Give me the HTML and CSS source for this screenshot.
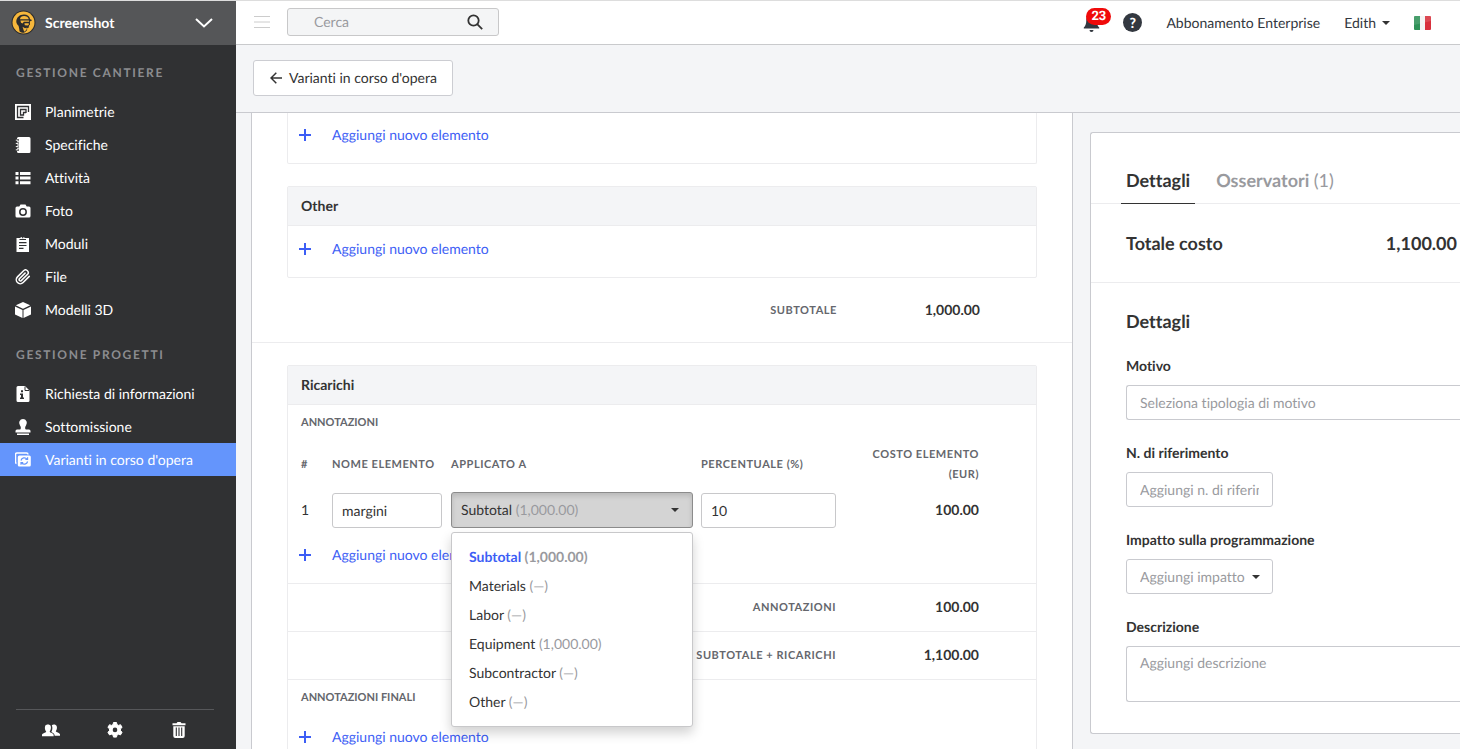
FILE: index.html
```html
<!DOCTYPE html>
<html lang="it">
  <head>
    <meta charset="UTF-8" />
    <meta name="viewport" content="width=device-width, initial-scale=1.0" />
    <title>Varianti in corso d'opera</title>
    <link rel="stylesheet" href="styles.css">
  </head>
  <body>
    <aside class="sidebar">
      <button type="button" class="project-switch">
        <svg class="logo" viewBox="0 0 26 26">
          <circle cx="13" cy="13" r="12.5" fill="#2b2b2d"/>
          <circle cx="13" cy="13" r="11.4" fill="#f6b73c"/>
          <path d="M5.500 11.500C6 7.500 9 4.600 13.400 4.600c3.600 0 6 2 6.500 5l1.500.5v1.300l-1.700.2v3.800l-1 .6-.3 2.400-1.500.4-.2 2.200-1.700 1.600-1.500 1c-2 0-3.500-.6-4.700-1.600C8.800 20 8.300 18 7.800 16.300 6.300 15 5.300 13.500 5.500 11.500z" fill="#2b2b2d"/>
          <path d="M9.300 9.500c.3-2 1.900-3.300 4.300-3.300 2.500 0 4.300 1.200 4.900 3.300zM9.800 11h9v1.100h-5.400l-1.400 1.900-1.600-.8zM14 13.900h4.500v1.400l-1.200.8-3-.3zM12 17.500l2.500 1.500 2-.6-.5 2.400-2.300 1.900z" fill="#f6b73c"/>
        </svg>
        <span class="project-name">Screenshot</span>
        <svg class="chevron" viewBox="0 0 18 10"><path d="M1 1l8 7.500L17 1" fill="none" stroke="#fff" stroke-width="2"/></svg>
      </button>

      <nav class="nav">
        <div class="nav-group">
          <h2 class="nav-title">Gestione cantiere</h2>
          <a href="#" class="nav-item">
            <svg class="icon" viewBox="0 0 16 16"><path d="M0 0h16v16H0z" fill="#fff"/><path d="M8.500 13.500h-6v-11h11v5.500M5.500 11V5.500h5.500v3H8.500v2.500z" fill="none" stroke="#303133" stroke-width="1.300"/><path d="M11 9h4v5h-5v-2.500h1z" fill="#fff"/></svg>
            Planimetrie
          </a>
          <a href="#" class="nav-item">
            <svg class="icon" viewBox="0 0 16 16"><path d="M3.500 0H14a1.500 1.500 0 0 1 1.500 1.500v13A1.500 1.500 0 0 1 14 16H3.500A1.500 1.500 0 0 1 2 14.500v-13A1.500 1.500 0 0 1 3.500 0z" fill="#fff"/><path d="M.8 3.200h3M.8 6.400h3M.8 9.600h3M.8 12.800h3" stroke="#303133" stroke-width="2.200"/><path d="M.8 3.200h2.600M.8 6.400h2.600M.8 9.600h2.600M.8 12.800h2.600" stroke="#fff" stroke-width="1"/></svg>
            Specifiche
          </a>
          <a href="#" class="nav-item">
            <svg class="icon" viewBox="0 0 16 16" fill="#fff"><path d="M.5 2H3.500v3H.5zM5 2h10.500v3H5zM.5 6.600H3.500v3H.5zM5 6.600h10.500v3H5zM.5 11.200H3.500v3H.5zM5 11.200h10.500v3H5z"/></svg>
            Attività
          </a>
          <a href="#" class="nav-item">
            <svg class="icon" viewBox="0 0 16 16"><path d="M5.500 1.500h5l1.200 2H14A1.500 1.500 0 0 1 15.500 5v8A1.500 1.500 0 0 1 14 14.500H2A1.500 1.500 0 0 1 .5 13V5A1.500 1.500 0 0 1 2 3.500h2.300z" fill="#fff"/><circle cx="8" cy="9" r="3.200" fill="none" stroke="#303133" stroke-width="1.500"/></svg>
            Foto
          </a>
          <a href="#" class="nav-item">
            <svg class="icon" viewBox="0 0 16 16"><path d="M1.500 2H5a3 2.500 0 0 1 5 0h4v14h-12.500z" fill="#fff"/><path d="M4.500 3.500h6.500M7.700 1v1.300M4 6.700h7.500M4 9.500h7.500M4 12.300h4.500" stroke="#303133" stroke-width="1.200"/></svg>
            Moduli
          </a>
          <a href="#" class="nav-item">
            <svg class="icon" viewBox="0 0 24 24"><path d="M21.400 11.100l-9.200 9.200a6 6 0 0 1-8.500-8.500l9.200-9.200a4 4 0 0 1 5.700 5.700l-9.200 9.200a2 2 0 0 1-2.800-2.800l8.500-8.500" fill="none" stroke="#fff" stroke-width="2.300" stroke-linecap="round"/></svg>
            File
          </a>
          <a href="#" class="nav-item">
            <svg class="icon" viewBox="0 0 16 16" fill="#fff"><path d="M8 0l7.200 3.300L8 6.700.8 3.300zM0 4.400l7.500 3.500V16L0 12.500zM16 4.400L8.500 7.900V16l7.500-3.500z"/></svg>
            Modelli 3D
          </a>
        </div>

        <div class="nav-group">
          <h2 class="nav-title">Gestione progetti</h2>
          <a href="#" class="nav-item">
            <svg class="icon" viewBox="0 0 16 16"><path d="M3 0h7l4.500 4.500V14.500A1.500 1.500 0 0 1 13 16H3a1.500 1.500 0 0 1-1.500-1.500v-13A1.500 1.500 0 0 1 3 0z" fill="#fff"/><path d="M10 .5V4.500h4" fill="none" stroke="#303133"/><path d="M6 4.300h2v2H6zM5 7.500h3V11.500h1V13H5v-1.500h1V9H5z" fill="#303133"/></svg>
            Richiesta di informazioni
          </a>
          <a href="#" class="nav-item">
            <svg class="icon" viewBox="0 0 16 16" fill="#fff"><path d="M8 0a4 4 0 0 1 3 6.500C10 8 9.800 9.500 10.800 10.500H14a1.500 1.500 0 0 1 1.500 1.500V13.500H.5v-1.500A1.500 1.500 0 0 1 2 10.500h3.200C6.200 9.500 6 8 5 6.500A4 4 0 0 1 8 0zM2 14.600h12V16H2z"/></svg>
            Sottomissione
          </a>
          <a href="#" class="nav-item active">
            <svg class="icon" viewBox="0 0 16 16"><path d="M1.500 11.500a1.500 1.500 0 0 1-1-1.500V2.500A1.500 1.500 0 0 1 2 1h9.500A1.500 1.500 0 0 1 13 2.500" fill="none" stroke="#fff" stroke-width="1.500"/><rect x="2.800" y="3.500" width="13" height="11" rx="1.500" fill="#fff"/><path d="M6 8.500a3.400 3.400 0 0 1 6-1.300M12.600 9.500a3.400 3.400 0 0 1-6 1.300M12.600 5.300v2.200h-2.200M6 12.700v-2.200h2.200" fill="none" stroke="#6495fc" stroke-width="1.200"/></svg>
            Varianti in corso d'opera
          </a>
        </div>
      </nav>

      <div class="sidebar-tools">
        <button type="button" class="tool" aria-label="Persone">
          <svg class="icon icon-wide" viewBox="0 1 17 14" fill="#fff"><path d="M0 14v-1.500C.3 11 3.500 10.500 4 9.600 2.600 8 2.500 5.500 3 4.200 3.500 2.300 7.700 2.300 8.200 4.200c.5 1.300.2 3.800-1 5.400.5.900 3.500 1.400 3.800 2.900V14zM9.300 3.400c1.200-1.200 4.200-.7 4.600 1 .5 1.500.2 3.300-.9 4.700.4.900 3.500 1.400 4 3V13.500h-5c-.1-2-1.300-2.500-3.200-3.500.9-1.500 1.500-4.300.5-6.600z"/></svg>
        </button>
        <button type="button" class="tool" aria-label="Impostazioni">
          <svg class="icon" viewBox="0 0 16 16"><path d="M6.500.5h3l.4 2 1.600.9 2-.7 1.600 2.700-1.600 1.400v2l1.600 1.400-1.600 2.700-2-.7-1.600.9-.4 2h-3l-.4-2-1.600-.9-2 .7L.9 10.200l1.600-1.400v-2L.9 5.400l1.600-2.700 2 .7 1.600-.9z" fill="#fff" stroke="#fff" stroke-linejoin="round"/><circle cx="8" cy="7.900" r="2.300" fill="#303133"/></svg>
        </button>
        <button type="button" class="tool" aria-label="Cestino">
          <svg class="icon" viewBox="0 0 16 16"><path d="M1.500 1.300h4L6.500 0h3l1 1.300h4v2h-13zM2.300 4.200h11.400V14a2 2 0 0 1-2 2H4.300a2 2 0 0 1-2-2z" fill="#fff"/><path d="M5.300 5.500v8.500M8 5.500v8.500M10.700 5.500v8.500" stroke="#303133" stroke-width="1.100"/></svg>
        </button>
      </div>
    </aside>

    <div class="page">
      <header class="topbar">
        <button type="button" class="menu-toggle" aria-label="Menu">
          <svg class="icon" viewBox="0 0 16 16"><path d="M0 2.500h16M0 8h16M0 13.500h16" stroke="#ccc"/></svg>
        </button>
        <form class="search">
          <input type="search" class="search-input" placeholder="Cerca" aria-label="Cerca">
          <button type="button" class="search-button" aria-label="Avvia ricerca">
            <svg class="icon" viewBox="0 0 16 16" fill="none" stroke="#333" stroke-width="1.800"><circle cx="6.500" cy="6.500" r="5.200"/><path d="M10.200 10.200l5 5"/></svg>
          </button>
        </form>
        <div class="account">
          <button type="button" class="bell" aria-label="Notifiche">
            <svg class="bell-icon" viewBox="0 0 16 20" fill="#333840"><path d="M8 1.500c3.200 0 5.200 2.300 5.200 5.500 0 4 .8 5.800 2.500 7.500v1H.3v-1C2 12.800 2.800 11 2.800 7c0-3.200 2-5.500 5.200-5.500zM6 17h4a2 2 0 0 1-4 0z"/></svg>
            <span class="badge">23</span>
          </button>
          <button type="button" class="help" aria-label="Aiuto">?</button>
          <a href="#" class="plan">Abbonamento Enterprise</a>
          <button type="button" class="user">Edith <span class="caret"></span></button>
          <button type="button" class="lang" aria-label="Italiano">
            <svg class="flag" viewBox="0 0 17 14"><path d="M0 0h6v14H0z" fill="#2f9158"/><path d="M6 0h5v14H6z" fill="#f4f4f4"/><path d="M11 0h6v14h-6z" fill="#d8303c"/><path d="M0 0h17v5L0 9z" fill="#fff" opacity=".12"/></svg>
          </button>
        </div>
      </header>

      <div class="subbar">
        <a href="#" class="back">
          <svg class="back-icon" viewBox="0 0 12 12"><path d="M6.300 .8L1 6l5.300 5.200M1 6h11" fill="none" stroke="#333" stroke-width="1.500"/></svg>
          Varianti in corso d'opera
        </a>
      </div>

      <main class="content">
        <section class="costs">
          <div class="section">
            <div class="card card-cut">
              <a href="#" class="add-row"><span class="plus"></span>Aggiungi nuovo elemento</a>
            </div>
            <div class="card">
              <h3 class="card-title">Other</h3>
              <a href="#" class="add-row"><span class="plus"></span>Aggiungi nuovo elemento</a>
            </div>
            <div class="total-row subtotal">
              <span class="total-label">Subtotale</span>
              <span class="amount">1,000.00</span>
            </div>
          </div>

          <div class="section markups">
            <div class="card">
              <h3 class="card-title">Ricarichi</h3>
              <h4 class="card-label">Annotazioni</h4>
              <table class="markup-table">
                <colgroup>
                  <col class="col-index">
                  <col class="col-name">
                  <col>
                  <col class="col-percent">
                  <col class="col-cost">
                </colgroup>
                <thead>
                  <tr>
                    <th class="index">#</th>
                    <th>Nome elemento</th>
                    <th>Applicato a</th>
                    <th>Percentuale (%)</th>
                    <th class="cost">Costo elemento (EUR)</th>
                  </tr>
                </thead>
                <tbody>
                  <tr>
                    <td class="index">1</td>
                    <td><input type="text" class="input" value="margini" aria-label="Nome elemento"></td>
                    <td class="applied">
                      <div class="dropdown">
                        <button type="button" class="dropdown-toggle" aria-haspopup="listbox" aria-expanded="true">
                          <span>Subtotal <span class="muted">(1,000.00)</span></span>
                          <span class="caret"></span>
                        </button>
                        <ul class="dropdown-menu" role="listbox" aria-label="Applicato a">
                          <li role="option" class="option selected" aria-selected="true">Subtotal <span class="muted">(1,000.00)</span></li>
                          <li role="option" class="option">Materials <span class="muted">(—)</span></li>
                          <li role="option" class="option">Labor <span class="muted">(—)</span></li>
                          <li role="option" class="option">Equipment <span class="muted">(1,000.00)</span></li>
                          <li role="option" class="option">Subcontractor <span class="muted">(—)</span></li>
                          <li role="option" class="option">Other <span class="muted">(—)</span></li>
                        </ul>
                      </div>
                    </td>
                    <td><input type="text" class="input" value="10" aria-label="Percentuale"></td>
                    <td class="cost">100.00</td>
                  </tr>
                </tbody>
              </table>
              <a href="#" class="add-row"><span class="plus"></span>Aggiungi nuovo elemento</a>
              <div class="total-row">
                <span class="total-label">Annotazioni</span>
                <span class="amount">100.00</span>
              </div>
              <div class="total-row last">
                <span class="total-label">Subtotale + ricarichi</span>
                <span class="amount">1,100.00</span>
              </div>
              <h4 class="card-label">Annotazioni finali</h4>
              <a href="#" class="add-row"><span class="plus"></span>Aggiungi nuovo elemento</a>
            </div>
          </div>
        </section>

        <aside class="details">
          <div class="tabs" role="tablist">
            <button type="button" role="tab" class="tab current" aria-selected="true">Dettagli</button>
            <button type="button" role="tab" class="tab" aria-selected="false">Osservatori <span class="count">(1)</span></button>
          </div>
          <div class="total-cost">
            <span>Totale costo</span>
            <span>1,100.00</span>
          </div>
          <form class="details-form">
            <h3 class="form-title">Dettagli</h3>
            <div class="field">
              <label for="reason">Motivo</label>
              <select id="reason" class="control">
                <option>Seleziona tipologia di motivo</option>
              </select>
            </div>
            <div class="field">
              <label for="reference">N. di riferimento</label>
              <input id="reference" type="text" class="control short" placeholder="Aggiungi n. di riferimento">
            </div>
            <div class="field">
              <label for="impact">Impatto sulla programmazione</label>
              <div class="select-wrap short">
                <select id="impact" class="control">
                  <option>Aggiungi impatto</option>
                </select>
                <span class="caret"></span>
              </div>
            </div>
            <div class="field">
              <label for="description">Descrizione</label>
              <textarea id="description" class="control area" placeholder="Aggiungi descrizione"></textarea>
            </div>
          </form>
        </aside>
      </main>
    </div>
  </body>
</html>
```
FILE: styles.css
```css
* {
  box-sizing: border-box;
}
body {
  margin: 0;
  height: 100vh;
  overflow: hidden;
  display: flex;
  border-top: 1px solid #ddd;
  background: #f4f5f7;
  color: #333;
  font-family: Lato, "Liberation Sans", sans-serif;
  font-size: 14px;
  line-height: 20px;
  font-variant-ligatures: none;
  text-rendering: geometricPrecision;
}
button,
input,
select,
textarea {
  font: inherit;
  font-variant-ligatures: none;
  text-rendering: inherit;
  color: inherit;
}
button {
  border: 0;
  padding: 0;
  background: none;
  cursor: pointer;
}
a {
  color: inherit;
  text-decoration: none;
}
h2,
h3,
h4 {
  margin: 0;
}
.icon {
  width: 16px;
  height: 16px;
  flex: none;
  display: block;
}
.icon-wide {
  width: 18px;
}
.muted {
  color: #999a9e;
}
.caret {
  border: 4px solid transparent;
  border-top-color: #333;
  border-bottom: 0;
}

/* Sidebar */
.sidebar {
  width: 236px;
  flex: none;
  display: flex;
  flex-direction: column;
  background: #303133;
  color: #fff;
}
.project-switch {
  height: 44px;
  display: flex;
  align-items: center;
  gap: 9px;
  padding: 0 23px 1px 11px;
  background: #555658;
  text-align: left;
}
.logo {
  width: 25px;
  height: 25px;
}
.project-name {
  flex: 1;
  font-weight: 700;
}
.chevron {
  width: 18px;
  height: 10px;
}
.nav {
  flex: 1;
}
.nav-group + .nav-group {
  margin-top: 1px;
}
.nav-title {
  padding: 18px 16px 12px;
  color: #8c8d90;
  font-size: 12px;
  font-weight: 700;
  letter-spacing: 0.14em;
  text-transform: uppercase;
}
.nav-item {
  height: 33px;
  display: flex;
  align-items: center;
  gap: 14px;
  padding: 0 15px;
}
.nav-item.active {
  background: #6495fc;
}
.sidebar-tools {
  display: flex;
  justify-content: center;
  margin: 0 22px 0 16px;
  padding: 12px 0 11px;
  border-top: 1px solid #56575a;
}
.tool {
  width: 64px;
  display: flex;
  justify-content: center;
}

/* Top bar */
.page {
  flex: 1;
  min-width: 0;
  display: flex;
  flex-direction: column;
}
.topbar {
  height: 44px;
  flex: none;
  display: flex;
  align-items: center;
  padding: 0 29px 1px 18px;
  background: #fff;
  border-bottom: 1px solid #c9cacc;
}
.menu-toggle {
  margin-right: 17px;
}
.search {
  width: 212px;
  height: 28px;
  display: flex;
  align-items: center;
  padding: 0 15px 0 26px;
  background: #f4f5f6;
  border: 1px solid #c8c8c9;
  border-radius: 3px;
}
.search-input {
  flex: 1;
  min-width: 0;
  padding: 0;
  border: 0;
  background: none;
}
.search-input::placeholder {
  color: #999a9e;
}
.account {
  margin-left: auto;
  display: flex;
  align-items: center;
  padding-top: 1px;
  color: #333840;
}
.bell {
  position: relative;
  margin-right: 23px;
}
.bell-icon {
  display: block;
  width: 17px;
  height: 20px;
}
.badge {
  position: absolute;
  top: -5px;
  left: 3px;
  padding: 0 5px;
  border-radius: 9px;
  background: #f00a0a;
  color: #fff;
  font-family: Roboto, sans-serif;
  font-size: 13px;
  font-weight: 700;
  line-height: 17px;
}
.help {
  width: 19px;
  height: 19px;
  margin-right: 24px;
  border-radius: 50%;
  background: #333840;
  color: #fff;
  font-size: 14px;
  font-weight: 900;
  line-height: 19px;
}
.plan {
  margin-right: 24px;
}
.user {
  display: flex;
  align-items: center;
  gap: 6px;
  margin-right: 24px;
}
.flag {
  display: block;
  width: 17px;
  height: 14px;
  border-radius: 1px;
}

.subbar {
  flex: none;
  height: 68px;
  display: flex;
  align-items: center;
  padding-left: 17px;
  padding-bottom: 1px;
  border-bottom: 1px solid #c9cacf;
}
.back {
  height: 36px;
  display: flex;
  align-items: center;
  gap: 7px;
  padding: 0 15px 0 16px;
  background: #fff;
  border: 1px solid #cccdd2;
  border-radius: 3px;
}
.back-icon {
  width: 12px;
  height: 12px;
}

/* Content */
.content {
  flex: 1;
  min-height: 0;
  overflow: hidden;
  display: grid;
  grid-template-columns: 1fr 370px;
  gap: 17px;
  padding-left: 15px;
}
.costs {
  background: #fff;
  border: solid #c9cacf;
  border-width: 0 1px;
}
.section {
  padding: 0 35px;
}
.markups {
  padding-top: 22px;
  border-top: 1px solid #ececee;
}
.card {
  border: 1px solid #ececee;
  border-radius: 2px;
}
.card-cut {
  margin: -1px 0 22px;
  border-top: 0;
}
.card-title {
  padding: 9px 13px;
  background: #f4f5f7;
  border-bottom: 1px solid #ececee;
  font-size: 14px;
  font-weight: 700;
}
.add-row {
  display: flex;
  align-items: center;
  padding: 13px 11px 18px;
  color: #3d5ef5;
}
.plus {
  width: 12px;
  height: 12px;
  margin-right: 21px;
  background:
    linear-gradient(currentColor, currentColor) center / 12px 2px no-repeat,
    linear-gradient(currentColor, currentColor) center / 2px 12px no-repeat;
}
.card-label {
  padding: 8px 13px 6px;
  color: #65676d;
  font-size: 11px;
  font-weight: 700;
  text-transform: uppercase;
}
.total-row {
  display: flex;
  align-items: center;
  justify-content: flex-end;
  padding: 13px 57px 14px 0;
  border-top: 1px solid #ececee;
}
.total-row.last {
  border-bottom: 1px solid #ececee;
}
.total-row.subtotal {
  padding: 22px 57px;
  border-top: 0;
}
.total-label {
  padding-top: 2px;
  color: #65676d;
  font-size: 11px;
  font-weight: 700;
  letter-spacing: 0.05em;
  line-height: 18px;
  text-transform: uppercase;
}
.amount {
  width: 143px;
  text-align: right;
  font-weight: 700;
}
.markup-table {
  width: 100%;
  table-layout: fixed;
  border-collapse: collapse;
}
.col-index {
  width: 44px;
}
.col-name {
  width: 119px;
}
.col-percent {
  width: 144px;
}
.col-cost {
  width: 191px;
}
.markup-table th {
  padding: 6px 0 4px;
  color: #65676d;
  font-size: 11px;
  font-weight: 700;
  letter-spacing: 0.05em;
  text-align: left;
  text-transform: uppercase;
}
.markup-table td {
  padding: 3px 9px 4px 0;
}
.markup-table .index {
  padding-left: 13px;
}
.markup-table .applied {
  padding-right: 8px;
}
.markup-table .cost {
  padding-right: 57px;
  text-align: right;
  font-weight: 700;
}
.input {
  display: block;
  width: 100%;
  height: 35px;
  padding: 0 9px;
  background: #fff;
  border: 1px solid #c8c8ca;
  border-radius: 3px;
}
.dropdown {
  position: relative;
}
.dropdown-toggle {
  width: 100%;
  height: 36px;
  display: flex;
  align-items: center;
  justify-content: space-between;
  padding: 0 13px 0 9px;
  background: #d4d4d4;
  border: 1px solid #8c8c8c;
  border-radius: 3px;
  box-shadow: inset 0 3px 5px rgba(0, 0, 0, 0.125);
}
.dropdown-menu {
  position: absolute;
  top: 100%;
  left: 0;
  right: 0;
  z-index: 5;
  margin: 4px 0 0;
  padding: 9px 0 10px;
  list-style: none;
  background: #fff;
  border: 1px solid #c8c8ca;
  border-radius: 3px;
  box-shadow: 0 6px 12px rgba(0, 0, 0, 0.18);
}
.option {
  padding: 0 17px;
  line-height: 29px;
}
.option.selected {
  color: #3d5ef5;
  font-weight: 700;
}

/* Details panel */
.details {
  align-self: start;
  margin-top: 19px;
  background: #fff;
  border: 1px solid #c9cacf;
  border-right: 0;
  border-radius: 3px 0 0 3px;
}
.tabs {
  display: flex;
  gap: 16px;
  padding: 33px 0 0 30px;
  border-bottom: 1px solid #ececee;
}
.tab {
  margin-bottom: -1px;
  padding: 4px 5px 13px;
  border-bottom: 1px solid transparent;
  color: #999a9e;
  font-size: 18px;
  font-weight: 700;
}
.tab.current {
  color: #333;
  border-bottom-color: #333;
}
.count {
  font-weight: 400;
}
.total-cost {
  display: flex;
  justify-content: space-between;
  padding: 29px 3px 29px 35px;
  border-bottom: 1px solid #ececee;
  font-size: 18px;
  font-weight: 700;
}
.details-form {
  display: flex;
  flex-direction: column;
  gap: 23px;
  padding: 28px 0 31px 35px;
}
.form-title {
  padding-bottom: 2px;
  font-size: 18px;
  font-weight: 700;
}
.field {
  display: flex;
  flex-direction: column;
  gap: 9px;
}
.field label {
  font-weight: 700;
}
.control {
  width: 100%;
  height: 35px;
  padding: 0 13px;
  appearance: none;
  background: #fff;
  border: 1px solid #c9cacf;
  border-radius: 3px;
  color: #999a9e;
}
.control::placeholder {
  color: #999a9e;
}
.field > .control:not(.short) {
  border-right: 0;
  border-radius: 3px 0 0 3px;
}
.short {
  width: 147px;
}
.select-wrap {
  position: relative;
}
.select-wrap .caret {
  position: absolute;
  top: 16px;
  right: 13px;
}
.area {
  display: block;
  height: 56px;
  padding: 6px 13px;
  resize: none;
}
```
